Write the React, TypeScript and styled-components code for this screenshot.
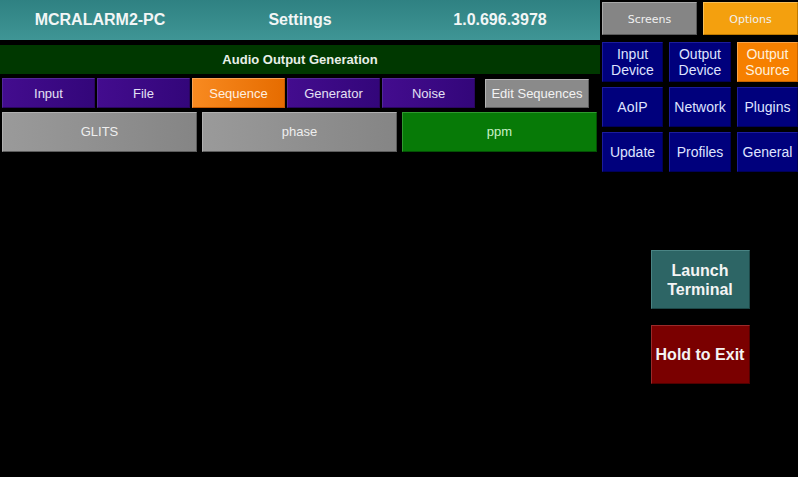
import styled, { createGlobalStyle } from "styled-components";

const GlobalStyle = createGlobalStyle`
  html, body {
    margin: 0;
    padding: 0;
    background: #000;
  }
  body {
    font-family: "Liberation Sans", Arial, sans-serif;
    width: 798px;
    height: 477px;
    overflow: hidden;
  }
`;

const Screen = styled.div`
  display: flex;
  width: 798px;
  height: 477px;
  background: #000;
`;

const LeftColumn = styled.div`
  width: 600px;
  display: flex;
  flex-direction: column;
`;

const Header = styled.div`
  height: 40px;
  display: grid;
  grid-template-columns: repeat(3, 1fr);
  align-items: center;
  background: linear-gradient(to bottom, #2f8182, #3f9595);
  color: #f2f6f6;
  font-weight: bold;
  font-size: 16px;
  text-align: center;
`;

const SectionBar = styled.div`
  margin-top: 5px;
  height: 29px;
  background: #003800;
  color: #e8efe8;
  font-weight: bold;
  font-size: 13px;
  display: flex;
  align-items: center;
  justify-content: center;
`;

const TabRow = styled.div`
  margin-top: 4px;
  height: 30px;
  display: flex;
  align-items: center;
  gap: 2px;
  padding-left: 2px;
`;

const Tab = styled.div<{ $active?: boolean }>`
  width: 93px;
  height: 30px;
  box-sizing: border-box;
  display: flex;
  align-items: center;
  justify-content: center;
  font-size: 13px;
  color: ${(p) => (p.$active ? "#fff0e0" : "#e4e0f4")};
  background: ${(p) =>
    p.$active
      ? "linear-gradient(to right, #f88a20, #e66c00)"
      : "linear-gradient(to right, #430c8e, #33067a)"};
  border: 1px solid ${(p) => (p.$active ? "#f9a350" : "#52289a")};
  border-right-color: ${(p) => (p.$active ? "#c85a00" : "#2a0560")};
  border-bottom-color: ${(p) => (p.$active ? "#c85a00" : "#2a0560")};
`;

const EditButton = styled.div`
  margin-left: 8px;
  width: 104px;
  height: 29px;
  box-sizing: border-box;
  display: flex;
  align-items: center;
  justify-content: center;
  font-size: 13px;
  color: #f2f2f2;
  background: #8a8a8a;
  border: 1px solid #b4b4b4;
  border-right-color: #5e5e5e;
  border-bottom-color: #5e5e5e;
`;

const ItemRow = styled.div`
  margin-top: 4px;
  display: flex;
  gap: 5px;
  padding-left: 2px;
`;

const Item = styled.div<{ $selected?: boolean }>`
  width: 195px;
  height: 40px;
  box-sizing: border-box;
  display: flex;
  align-items: center;
  justify-content: center;
  font-size: 13px;
  padding-bottom: 2px;
  color: ${(p) => (p.$selected ? "#c9f2c9" : "#eeeeee")};
  background: ${(p) =>
    p.$selected
      ? "#077a07"
      : "linear-gradient(to right, #9a9a9a, #858585)"};
  border: 1px solid ${(p) => (p.$selected ? "#2f9a2f" : "#b0b0b0")};
  border-right-color: ${(p) => (p.$selected ? "#045004" : "#5c5c5c")};
  border-bottom-color: ${(p) => (p.$selected ? "#045004" : "#5c5c5c")};
`;

const RightColumn = styled.div`
  width: 196px;
  margin-left: 2px;
  display: flex;
  flex-direction: column;
`;

const TopButtons = styled.div`
  margin-top: 2px;
  display: flex;
  gap: 6px;
`;

const TopButton = styled.div<{ $active?: boolean }>`
  flex: 1;
  height: 33px;
  box-sizing: border-box;
  padding-top: 2px;
  display: flex;
  align-items: center;
  justify-content: center;
  font-family: "DejaVu Sans", Verdana, sans-serif;
  font-size: 11px;
  color: #f0f0f0;
  background: ${(p) => (p.$active ? "#f4a00e" : "#858585")};
  border: 1px solid ${(p) => (p.$active ? "#f8be55" : "#a8a8a8")};
  border-right-color: ${(p) => (p.$active ? "#c07a00" : "#5a5a5a")};
  border-bottom-color: ${(p) => (p.$active ? "#c07a00" : "#5a5a5a")};
`;

const MenuGrid = styled.div`
  margin-top: 7px;
  display: grid;
  grid-template-columns: 61px 62px 61px;
  column-gap: 6px;
  row-gap: 5px;
`;

const MenuButton = styled.div<{ $active?: boolean }>`
  height: 40px;
  box-sizing: border-box;
  display: flex;
  align-items: center;
  justify-content: center;
  text-align: center;
  font-size: 14px;
  line-height: 16px;
  color: ${(p) => (p.$active ? "#fff0dc" : "#dfe3ff")};
  background: ${(p) => (p.$active ? "#f68000" : "#00007c")};
  border: 1px solid ${(p) => (p.$active ? "#f9a44a" : "#1c1c9c")};
  border-right-color: ${(p) => (p.$active ? "#c86400" : "#000058")};
  border-bottom-color: ${(p) => (p.$active ? "#c86400" : "#000058")};
`;

const ActionStack = styled.div`
  margin-top: 78px;
  display: flex;
  flex-direction: column;
  align-items: center;
  gap: 16px;
`;

const ActionButton = styled.div<{ $tone: "teal" | "red" }>`
  width: 99px;
  height: 59px;
  box-sizing: border-box;
  display: flex;
  align-items: center;
  justify-content: center;
  text-align: center;
  font-weight: bold;
  font-size: 16px;
  line-height: 19px;
  color: #f4f4f4;
  background: ${(p) => (p.$tone === "teal" ? "#2d6565" : "#7a0000")};
  border: 1px solid ${(p) => (p.$tone === "teal" ? "#4a8484" : "#9a2a2a")};
  border-right-color: ${(p) => (p.$tone === "teal" ? "#1c4646" : "#500000")};
  border-bottom-color: ${(p) => (p.$tone === "teal" ? "#1c4646" : "#500000")};
`;

const tabs = ["Input", "File", "Sequence", "Generator", "Noise"];
const items = ["GLITS", "phase", "ppm"];
const menu = [
  ["Input", "Device"],
  ["Output", "Device"],
  ["Output", "Source"],
  ["AoIP"],
  ["Network"],
  ["Plugins"],
  ["Update"],
  ["Profiles"],
  ["General"],
];

export default function App() {
  return (
    <>
      <GlobalStyle />
      <Screen>
        <LeftColumn>
          <Header>
            <span>MCRALARM2-PC</span>
            <span>Settings</span>
            <span>1.0.696.3978</span>
          </Header>
          <SectionBar>Audio Output Generation</SectionBar>
          <TabRow>
            {tabs.map((t) => (
              <Tab key={t} $active={t === "Sequence"}>
                {t}
              </Tab>
            ))}
            <EditButton>Edit Sequences</EditButton>
          </TabRow>
          <ItemRow>
            {items.map((i) => (
              <Item key={i} $selected={i === "ppm"}>
                {i}
              </Item>
            ))}
          </ItemRow>
        </LeftColumn>
        <RightColumn>
          <TopButtons>
            <TopButton>Screens</TopButton>
            <TopButton $active>Options</TopButton>
          </TopButtons>
          <MenuGrid>
            {menu.map((lines, idx) => (
              <MenuButton key={idx} $active={idx === 2}>
                <div>
                  {lines.map((l) => (
                    <div key={l}>{l}</div>
                  ))}
                </div>
              </MenuButton>
            ))}
          </MenuGrid>
          <ActionStack>
            <ActionButton $tone="teal">
              Launch
              <br />
              Terminal
            </ActionButton>
            <ActionButton $tone="red">Hold to Exit</ActionButton>
          </ActionStack>
        </RightColumn>
      </Screen>
    </>
  );
}
